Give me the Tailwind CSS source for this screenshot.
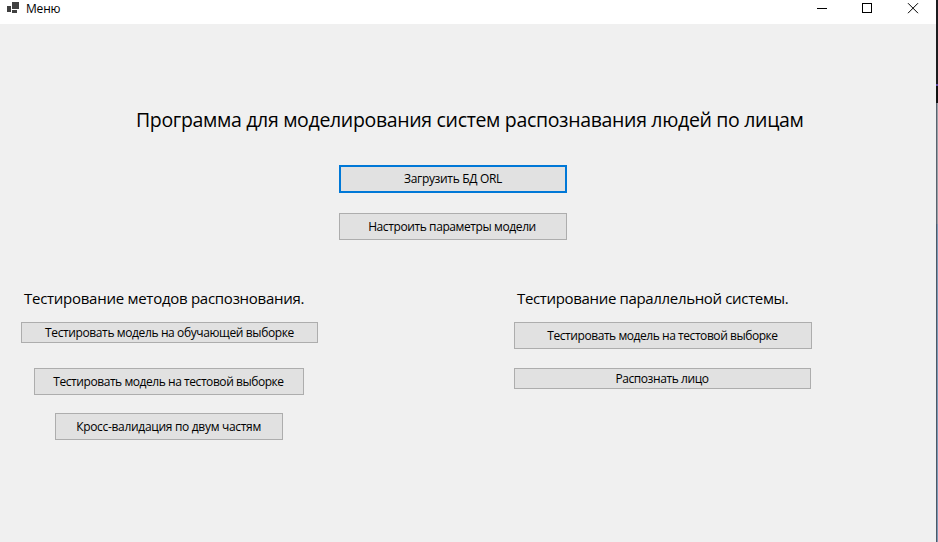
<!DOCTYPE html>
<html lang="ru">
<head>
<meta charset="utf-8">
<title>Меню</title>
<script src="https://cdn.jsdelivr.net/npm/@tailwindcss/browser@4"></script>
</head>
<body class="h-[542px] w-[938px] overflow-hidden bg-[#f0f0f0] font-['Open_Sans','Noto_Sans',sans-serif] text-black">
<div class="flex h-[542px] w-[938px]">
  <div class="flex w-[936px] flex-col">
    <header class="flex h-6 shrink-0 items-start justify-between bg-white">
      <div class="flex pl-[7px] pt-[1px]">
        <svg class="mt-px h-[11px] w-3" viewBox="0 0 12 11" fill="#404040" shape-rendering="crispEdges"><path d="M0 4h4v6H0zM5 0h7v7H5zM5 8h5v3H5z"/></svg>
        <span class="ml-[7px] text-[12px] leading-4 tracking-[-0.2px] whitespace-nowrap">Меню</span>
      </div>
      <div class="flex pt-[3px]">
        <svg class="h-[11px] w-[138px]" viewBox="0 0 138 11" fill="none" stroke="#000"><path d="M19 5.5h10M64.5 .5h9v9h-9z" shape-rendering="crispEdges"/><path d="M110 .2l10 10M120 .2l-10 10"/></svg>
      </div>
    </header>
    <main class="flex flex-col whitespace-nowrap text-[12px]">
      <h1 class="mt-[82px] ml-[136px] h-7 text-[19.5px] leading-7 tracking-[-0.33px]"><span>Программа для моделирования систем распознавания людей по лицам</span></h1>
      <div class="mt-[31px] ml-[339px] flex w-[228px] flex-col gap-5">
        <button class="flex h-7 items-center justify-center border-2 border-[#0078d7] bg-[#e1e1e1] tracking-[-0.33px]"><span>Загрузить БД ORL</span></button>
        <button class="flex h-[27px] items-center justify-center border border-[#adadad] bg-[#e1e1e1] tracking-[-0.4px]"><span class="mr-[2px]">Настроить параметры модели</span></button>
      </div>
      <div class="mt-[47px] flex">
        <section class="ml-[21px] flex w-[297px] flex-col items-center">
          <h2 class="h-[22px] self-start pl-[3px] text-[15px] leading-[22px] tracking-[-0.27px]"><span>Тестирование методов распознования.</span></h2>
          <button class="mt-[13px] flex h-[21px] w-[297px] items-center justify-center border border-[#adadad] bg-[#e1e1e1] tracking-[-0.38px]"><span>Тестировать модель на обучающей выборке</span></button>
          <button class="mt-[25px] mr-px flex h-[27px] w-[270px] items-center justify-center border border-[#adadad] bg-[#e1e1e1] tracking-[-0.44px]"><span class="mr-px">Тестировать модель на тестовой выборке</span></button>
          <button class="mt-[18px] mr-px flex h-[27px] w-[228px] items-center justify-center border border-[#adadad] bg-[#e1e1e1] tracking-[-0.31px]"><span class="mr-px">Кросс-валидация по двум частям</span></button>
        </section>
        <section class="ml-[196px] flex w-[298px] flex-col items-start">
          <h2 class="h-[22px] pl-[3px] text-[15px] leading-[22px] tracking-[-0.34px]"><span>Тестирование параллельной системы.</span></h2>
          <button class="mt-[13px] flex h-[27px] w-[298px] items-center justify-center border border-[#adadad] bg-[#e1e1e1] tracking-[-0.44px]"><span class="mr-px">Тестировать модель на тестовой выборке</span></button>
          <button class="mt-[19px] flex h-[21px] w-[297px] items-center justify-center border border-[#adadad] bg-[#e1e1e1] tracking-[-0.42px]"><span class="mr-px">Распознать лицо</span></button>
        </section>
      </div>
    </main>
  </div>
  <div class="flex w-[2px] flex-col">
    <div class="h-[84px] bg-[#1c1c1f]"></div>
    <div class="h-[2px] bg-[#5c4aa0]"></div>
    <div class="h-[17px] bg-[#111]"></div>
    <div class="h-[121px] border-l border-[#59636f] bg-[#9b9fa6]"></div>
    <div class="flex-1 border-l border-[#4c5968] bg-[#7f98b5]"></div>
  </div>
</div>
</body>
</html>
